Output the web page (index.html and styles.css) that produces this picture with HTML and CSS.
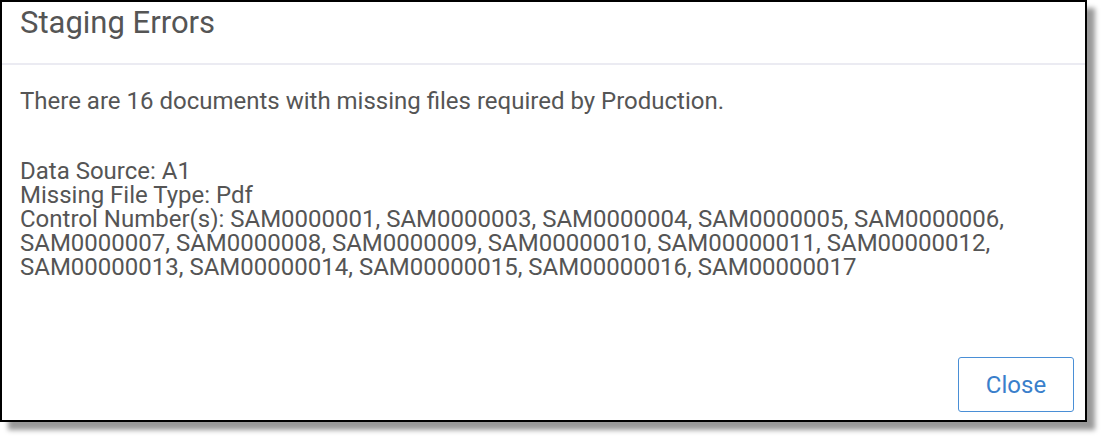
FILE: index.html
```html
<!DOCTYPE html>
<html>
<head>
<meta charset="utf-8">
<link rel="stylesheet" href="styles.css">
</head>
<body>
<div class="dialog">
  <div class="dialog-header">
    <h1 class="dialog-title">Staging Errors</h1>
  </div>
  <div class="dialog-body">
    <p class="summary">There are 16 documents with missing files required by Production.</p>
    <p class="details">Data Source: A1<br>Missing File Type: Pdf<br>Control Number(s): SAM0000001, SAM0000003, SAM0000004, SAM0000005, SAM0000006, SAM0000007, SAM0000008, SAM0000009, SAM00000010, SAM00000011, SAM00000012, SAM00000013, SAM00000014, SAM00000015, SAM00000016, SAM00000017</p>
  </div>
  <div class="dialog-footer">
    <button class="btn-close">Close</button>
  </div>
</div>
</body>
</html>
```
FILE: styles.css
```css
html, body {
  margin: 0;
  padding: 0;
  background: #ffffff;
}
body {
  height: 436px;
  overflow: hidden;
}
.dialog {
  box-sizing: border-box;
  width: 1087px;
  height: 422px;
  border: 2px solid #000;
  background: #fff;
  box-shadow: 8px 8px 5px rgba(0, 0, 0, 0.4);
  display: flex;
  flex-direction: column;
  font-family: Roboto, "Liberation Sans", sans-serif;
  color: #555;
}
.dialog-header {
  height: 63px;
  border-bottom: 2px solid #ebebf2;
  box-sizing: border-box;
  padding: 3px 18px 0;
}
.dialog-title {
  margin: 0;
  font-size: 31px;
  font-weight: 400;
  line-height: 36px;
  color: #555;
}
.dialog-body {
  flex: 1;
  padding: 24px 18px 0;
  font-size: 24px;
  line-height: 24px;
}
.summary {
  margin: 0 0 46px;
}
.details {
  margin: 0;
}
.dialog-footer {
  display: flex;
  justify-content: flex-end;
  padding: 0 11px 8px;
}
.btn-close {
  width: 116px;
  height: 55px;
  border: 1.5px solid #4a8fd6;
  border-radius: 3px;
  background: #fff;
  color: #3a7fcb;
  font-family: Roboto, "Liberation Sans", sans-serif;
  font-size: 24px;
  padding: 0;
}
```
